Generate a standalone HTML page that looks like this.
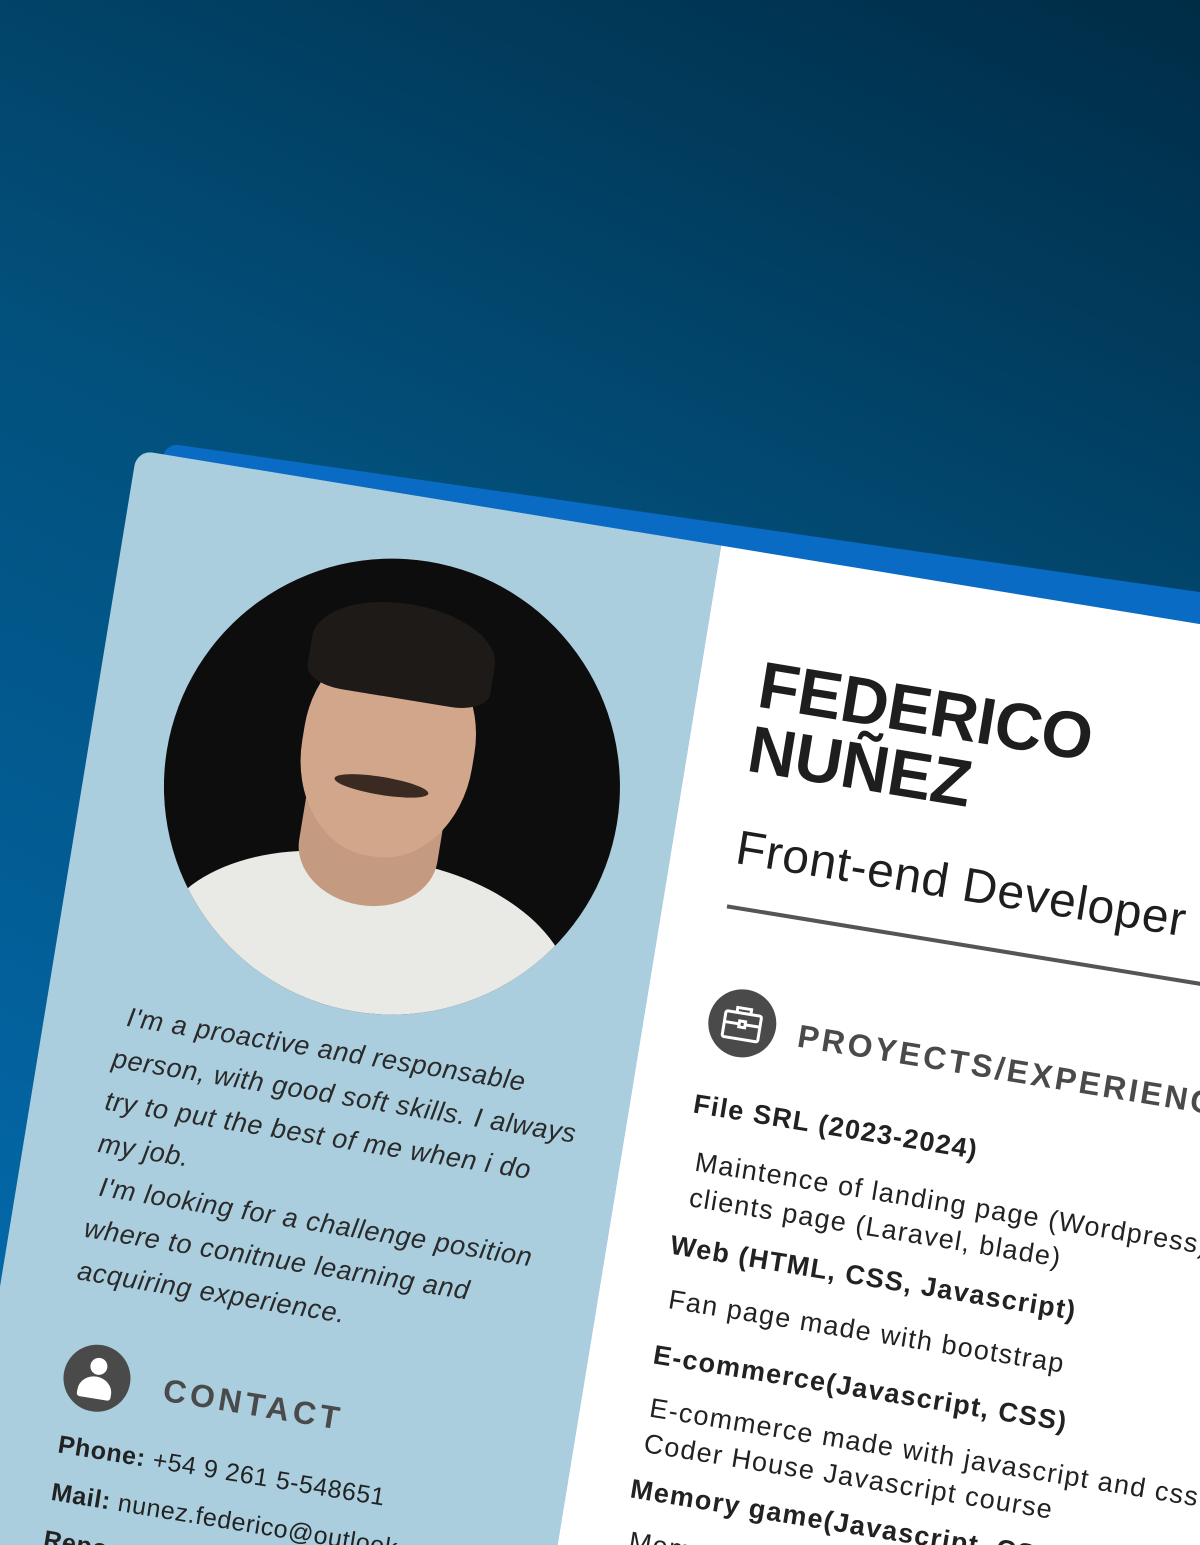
<!DOCTYPE html>
<html><head><meta charset="utf-8"><style>
html,body{margin:0;padding:0;width:1200px;height:1545px;overflow:hidden}
.wrap{position:relative;width:1200px;height:1545px;overflow:hidden;font-family:"Liberation Sans",sans-serif;
background:linear-gradient(205deg,#002c46 0%,#024f7a 40%,#0366a6 85%,#056bad 100%);}
.blue{position:absolute;left:165px;top:443px;width:1300px;height:1800px;background:#0a6bc4;border-radius:14px;transform-origin:0 0;transform:rotate(8.2deg)}
.card{position:absolute;left:137px;top:450px;width:1300px;height:1800px;transform-origin:0 0;transform:rotate(9.3deg);}
.left{position:absolute;left:0;top:0;width:592px;height:1800px;background:#abcedf;border-radius:16px 0 0 0}
.right{position:absolute;left:592px;top:0;width:708px;height:1800px;background:#fff}
.abs{position:absolute;white-space:nowrap}
.photo{position:absolute;left:78px;top:63px;width:456px;height:456px;border-radius:50%;overflow:hidden;background:#0d0d0d}
.about{position:absolute;left:74px;top:540px;width:470px;font-style:italic;font-size:27px;line-height:43px;color:#2a2a2a;letter-spacing:0.7px}
.about p{margin:0;text-indent:8px}
.ic{position:absolute;border-radius:50%;background:#4a4a4a}
.h{font-weight:bold;color:#4a4a4a;letter-spacing:3px;font-size:32px}
.b{font-weight:bold;font-size:27px;color:#222;letter-spacing:1.3px}
.d{font-size:27px;color:#222;letter-spacing:1.3px}
</style></head><body><div class="wrap">
<div class="blue"></div>
<div class="card">
  <div class="left">
    <div class="photo">
      <div style="position:absolute;left:20px;top:300px;width:420px;height:260px;border-radius:45% 45% 0 0;background:#e9e9e6"></div>
      <div style="position:absolute;left:145px;top:240px;width:140px;height:110px;border-radius:0 0 50% 50%;background:#c49a80"></div>
      <div style="position:absolute;left:132px;top:85px;width:172px;height:215px;border-radius:45% 45% 48% 48%;background:#d2a68a"></div>
      <div style="position:absolute;left:125px;top:45px;width:185px;height:95px;border-radius:50% 50% 20% 20%;background:#1e1a18"></div>
      <div style="position:absolute;left:170px;top:220px;width:95px;height:18px;border-radius:50%;background:#3a2a22"></div>
    </div>
    <div class="about">
      <p>I'm a proactive and responsable person, with good soft skills. I always try to put the best of me when i do my job.</p>
      <p>I'm looking for a challenge position where to conitnue learning and acquiring experience.</p>
    </div>
    <div class="ic" style="left:77px;top:889px;width:67px;height:67px">
      <div style="position:absolute;left:25px;top:13px;width:17px;height:17px;border-radius:50%;background:#fff"></div>
      <div style="position:absolute;left:16px;top:32px;width:34px;height:22px;border-radius:50% 50% 3px 3px/70% 70% 3px 3px;background:#fff"></div>
    </div>
    <div class="abs h" style="left:178px;top:905px;letter-spacing:4px">CONTACT</div>
    <div class="abs" style="left:83px;top:980px;font-size:25px;color:#222;letter-spacing:0.6px"><b>Phone:</b> +54 9 261 5-548651</div>
    <div class="abs" style="left:84px;top:1028px;font-size:25px;color:#222;letter-spacing:0.6px"><b>Mail:</b> nunez.federico@outlook.com</div>
    <div class="abs" style="left:84px;top:1076px;font-size:25px;color:#222;letter-spacing:0.6px"><b>Repo:</b> github.com</div>
  </div>
  <div class="right">
    <div class="abs" style="left:60px;top:98px;font-size:66px;font-weight:bold;color:#1e1e1e;line-height:65px;letter-spacing:-0.5px">FEDERICO<br>NUÑEZ</div>
    <div class="abs" style="left:64px;top:268px;font-size:48px;color:#1e1e1e;letter-spacing:0.8px">Front-end Developer</div>
    <div style="position:absolute;left:64px;top:353px;width:640px;height:4px;background:#555"></div>
    <div class="ic" style="left:64px;top:434px;width:68px;height:68px">
      <svg width="68" height="68" viewBox="0 0 68 68" style="position:absolute;left:0;top:0" fill="none" stroke="#fff" stroke-width="3">
        <rect x="16" y="24" width="36" height="26" rx="2"/><path d="M27 24v-5h14v5M16 35h36"/><rect x="31" y="32" width="6" height="6" fill="#4a4a4a"/>
      </svg>
    </div>
    <div class="abs h" style="left:155px;top:453px">PROYECTS/EXPERIENCE</div>
    <div class="abs b" style="left:63px;top:540px">File SRL (2023-2024)</div>
    <div class="abs d" style="left:74px;top:594px;line-height:36px">Maintence of landing page (Wordpress) and<br>clients page (Laravel, blade)</div>
    <div class="abs b" style="left:63px;top:683px">Web (HTML, CSS, Javascript)</div>
    <div class="abs d" style="left:70px;top:737px">Fan page made with bootstrap</div>
    <div class="abs b" style="left:64px;top:794px">E-commerce(Javascript, CSS)</div>
    <div class="abs d" style="left:69px;top:844px;line-height:36px">E-commerce made with javascript and css for<br>Coder House Javascript course</div>
    <div class="abs b" style="left:63px;top:930px">Memory game(Javascript, CSS)</div>
    <div class="abs d" style="left:70px;top:982px">Memory game made with javascript</div>
  </div>
</div>
</div></body></html>
